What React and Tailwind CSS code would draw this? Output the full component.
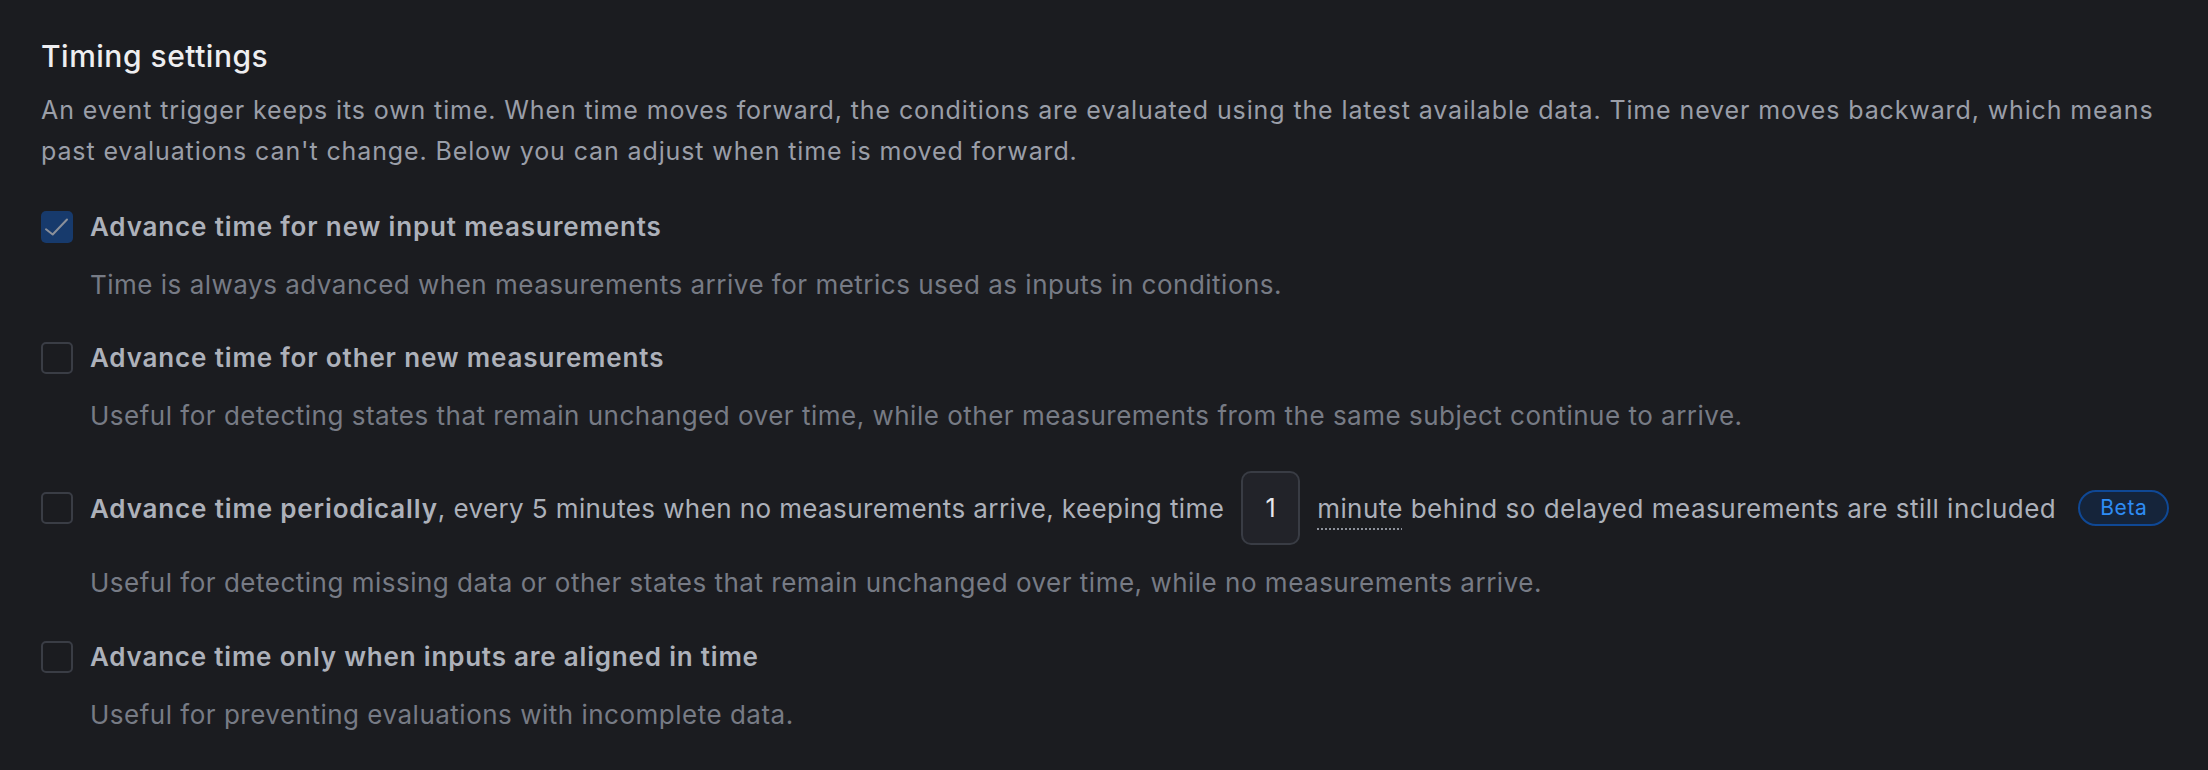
import React from "react";

function Check({ checked }) {
  if (checked) {
    return (
      <div className="w-[32px] h-[32px] shrink-0 rounded-[5px] bg-[#173a6c] flex items-center justify-center">
        <svg width="32" height="32" viewBox="0 0 32 32" fill="none">
          <polyline points="5,18.3 11.7,23.5 26,8.5" stroke="#8b909a" strokeWidth="2" strokeLinecap="round" strokeLinejoin="round" />
        </svg>
      </div>
    );
  }
  return <div className="w-[32px] h-[32px] shrink-0 rounded-[5px] border-2 border-[#3a3d45] bg-[#1b1c20]" />;
}

function Row({ checked, label, desc, children, className = "" }) {
  return (
    <div className={className}>
      <div className="flex items-center gap-[17px]">
        <Check checked={checked} />
        <div className="flex items-center text-[26px] leading-[41px] tracking-[0.4px] text-[#adb1ba] whitespace-nowrap">
          {label}
          {children}
        </div>
      </div>
      <p className="mt-[17px] pl-[49px] text-[26px] leading-[41px] tracking-[0.5px] text-[#777b85]">{desc}</p>
    </div>
  );
}

export default function App() {
  return (
    <div
      className="min-h-[770px] w-full bg-[#1b1c20] pl-[41px] pr-[40px] pt-[38px]"
      style={{ fontFamily: "Inter, 'Noto Sans', sans-serif" }}
    >
      <h2 className="text-[30px] leading-[36px] font-medium tracking-[0.5px] text-[#eeeef0]">Timing settings</h2>
      <p className="mt-[16px] text-[25px] leading-[41px] tracking-[0.88px] text-[#9a9ea8]">
        An event trigger keeps its own time. When time moves forward, the conditions are evaluated using the latest
        available data. Time never moves backward, which means past evaluations can't change. Below you can adjust when
        time is moved forward.
      </p>

      <Row
        className="mt-[34px]"
        checked
        label={<span className="font-semibold tracking-[0.85px]">Advance time for new input measurements</span>}
        desc="Time is always advanced when measurements arrive for metrics used as inputs in conditions."
      />
      <Row
        className="mt-[32px]"
        label={<span className="font-semibold tracking-[0.85px]">Advance time for other new measurements</span>}
        desc="Useful for detecting states that remain unchanged over time, while other measurements from the same subject continue to arrive."
      />
      <Row
        className="mt-[35px]"
        label={
          <span>
            <span className="font-semibold tracking-[0.85px]">Advance time periodically</span>, every 5 minutes when no
            measurements arrive, keeping time
          </span>
        }
        desc="Useful for detecting missing data or other states that remain unchanged over time, while no measurements arrive."
      >
        <div className="mx-[17px] w-[59px] h-[74px] rounded-[10px] border-2 border-[#393c44] bg-[#222329] flex items-center justify-center text-[25px] text-[#e8e8ec]">
          1
        </div>
        <span className="underline decoration-dotted decoration-2 underline-offset-[11px] decoration-[#8d919b]">minute</span>
        <span className="tracking-[0.5px]">&nbsp;behind so delayed measurements are still included</span>
        <span className="ml-[22px] h-[36px] px-[20px] rounded-full border-2 border-[#0f4895] bg-[#15243a] text-[#2e8cf4] text-[21px] leading-[32px] tracking-[0.6px]">
          Beta
        </span>
      </Row>
      <Row
        className="mt-[33px]"
        label={<span className="font-semibold tracking-[0.8px]">Advance time only when inputs are aligned in time</span>}
        desc="Useful for preventing evaluations with incomplete data."
      />
    </div>
  );
}
